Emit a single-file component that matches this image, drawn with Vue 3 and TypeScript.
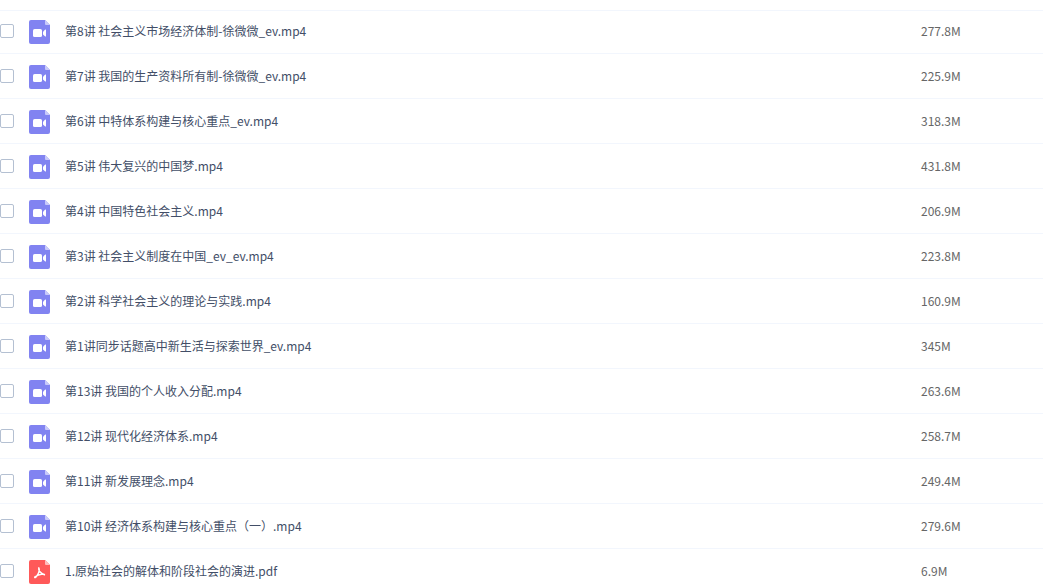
<script setup lang="ts">
interface FileEntry {
  name: string
  size: string
  kind: 'video' | 'pdf'
}

const files: FileEntry[] = [
  { name: '第8讲 社会主义市场经济体制-徐微微_ev.mp4', size: '277.8M', kind: 'video' },
  { name: '第7讲 我国的生产资料所有制-徐微微_ev.mp4', size: '225.9M', kind: 'video' },
  { name: '第6讲 中特体系构建与核心重点_ev.mp4', size: '318.3M', kind: 'video' },
  { name: '第5讲 伟大复兴的中国梦.mp4', size: '431.8M', kind: 'video' },
  { name: '第4讲 中国特色社会主义.mp4', size: '206.9M', kind: 'video' },
  { name: '第3讲 社会主义制度在中国_ev_ev.mp4', size: '223.8M', kind: 'video' },
  { name: '第2讲 科学社会主义的理论与实践.mp4', size: '160.9M', kind: 'video' },
  { name: '第1讲同步话题高中新生活与探索世界_ev.mp4', size: '345M', kind: 'video' },
  { name: '第13讲 我国的个人收入分配.mp4', size: '263.6M', kind: 'video' },
  { name: '第12讲 现代化经济体系.mp4', size: '258.7M', kind: 'video' },
  { name: '第11讲 新发展理念.mp4', size: '249.4M', kind: 'video' },
  { name: '第10讲 经济体系构建与核心重点（一）.mp4', size: '279.6M', kind: 'video' },
  { name: '1.原始社会的解体和阶段社会的演进.pdf', size: '6.9M', kind: 'pdf' },
]
</script>

<template>
  <main class="file-list">
    <table class="files">
      <tbody>
        <tr v-for="(file, i) in files" :key="file.name">
          <td class="pick">
            <input :id="`file-${i}`" class="tick" type="checkbox" />
          </td>
          <td class="title">
            <label class="entry" :for="`file-${i}`">
              <svg class="icon" viewBox="0 0 21 24" aria-hidden="true">
                <template v-if="file.kind === 'video'">
                  <path fill="#8183f1" d="M2 0H16L21 5V22a2 2 0 0 1-2 2H2a2 2 0 0 1-2-2V2a2 2 0 0 1 2-2z" />
                  <path fill="#c9caf9" d="M16 0L21 5H17a1 1 0 0 1-1-1z" />
                  <rect fill="#fff" x="4" y="9" width="9" height="8" rx="1.6" />
                  <path fill="#fff" d="M14 11.8L16.2 9.6Q17 9.2 17 10V16Q17 16.8 16.2 16.4L14 14.4z" />
                </template>
                <template v-else>
                  <path fill="#ff5959" d="M2 0H16L21 5V22a2 2 0 0 1-2 2H2a2 2 0 0 1-2-2V2a2 2 0 0 1 2-2z" />
                  <path fill="#ffbcbc" d="M16 0L21 5H17a1 1 0 0 1-1-1z" />
                  <path
                    fill="none"
                    stroke="#fff"
                    stroke-width="1.5"
                    stroke-linecap="round"
                    stroke-linejoin="round"
                    d="M9.8 7.8C9.4 10 11.6 13 15.4 14.8C16 13.6 10.5 13.8 6 16.8C5 18.2 7 17.6 8.2 15.4C9.8 12.8 10.8 9.6 9.8 7.8z"
                  />
                </template>
              </svg>
              <span>{{ file.name }}</span>
            </label>
          </td>
          <td class="size">{{ file.size }}</td>
        </tr>
      </tbody>
    </table>
  </main>
</template>

<style>
body {
  margin: 0;
  background: #fff;
}
</style>

<style scoped>
.file-list {
  padding-top: 10px;
  font-family: "Noto Sans CJK SC", sans-serif;
  font-size: 12px;
  line-height: 22px;
}

.files {
  width: 100%;
  table-layout: fixed;
  border-spacing: 0;
  border-top: 1px solid #f2f6fd;
}

td {
  padding: 11px 0 9px;
  border-bottom: 1px solid #f2f6fd;
  vertical-align: top;
}

tr:first-child td {
  padding-top: 9px;
}

.pick {
  width: 29px;
}

.tick {
  appearance: none;
  display: block;
  box-sizing: border-box;
  width: 14px;
  height: 14px;
  margin: 4px 0 0;
  border: 1px solid #b4c0d2;
  border-radius: 2px;
  background: #fff;
}

.tick:checked {
  background: #8183f1;
}

.entry {
  display: flex;
  gap: 15px;
  color: #424e67;
  white-space: nowrap;
}

.icon {
  flex: none;
  width: 21px;
  height: 24px;
}

.size {
  width: 122px;
  color: #666;
}
</style>
